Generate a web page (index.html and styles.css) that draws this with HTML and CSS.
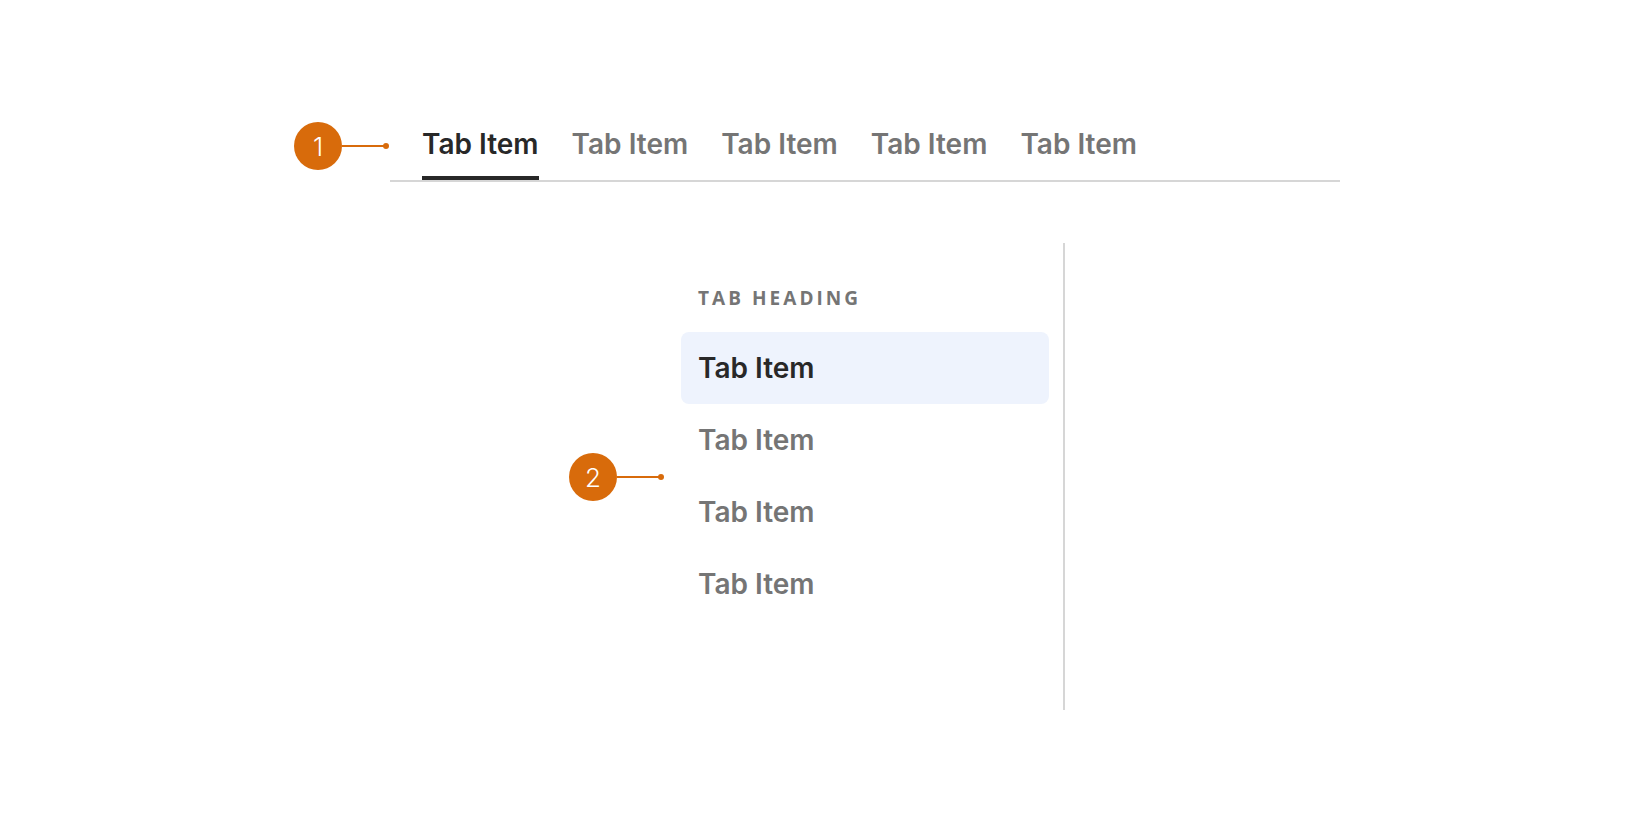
FILE: index.html
```html
<!DOCTYPE html>
<html lang="en">
<head>
<meta charset="utf-8">
<title>Tabs</title>
<link rel="stylesheet" href="styles.css">
</head>
<body>
<div class="page">
  <div class="htabs">
    <div class="annot annot-1"><span class="badge">1</span><span class="lead"></span><span class="dot"></span></div>
    <div class="htab active">Tab Item</div>
    <div class="htab">Tab Item</div>
    <div class="htab">Tab Item</div>
    <div class="htab">Tab Item</div>
    <div class="htab">Tab Item</div>
  </div>
  <div class="vnav">
    <div class="annot annot-2"><span class="badge">2</span><span class="lead"></span><span class="dot"></span></div>
    <div class="vheading">TAB HEADING</div>
    <div class="vtab active">Tab Item</div>
    <div class="vtab">Tab Item</div>
    <div class="vtab">Tab Item</div>
    <div class="vtab">Tab Item</div>
  </div>
</div>
</body>
</html>
```

FILE: styles.css
```css
* { box-sizing: border-box; }
html, body { margin: 0; padding: 0; background: #ffffff; }
body { font-family: "Inter", "Liberation Sans", sans-serif; }

.page {
  width: 1632px;
  height: 816px;
  padding-top: 128px;
}

.htabs {
  position: relative;
  margin-left: 390px;
  width: 950px;
  display: flex;
  gap: 33px;
  padding-left: 32px;
  border-bottom: 2px solid #d6d6d6;
}

.htab {
  font-size: 28px;
  font-weight: 600;
  line-height: 32px;
  color: #757575;
  padding-bottom: 16px;
  border-bottom: 4px solid transparent;
  white-space: nowrap;
}
.htab.active {
  color: #282828;
  border-bottom-color: #282828;
}

.vnav {
  position: relative;
  margin-top: 61px;
  margin-left: 681px;
  width: 384px;
  height: 467px;
  padding-top: 43px;
  padding-right: 14px;
  border-right: 2px solid #d6d6d6;
}

.vheading {
  font-family: "Open Sans", "Noto Sans", sans-serif;
  font-size: 19px;
  font-weight: 700;
  line-height: 24px;
  letter-spacing: 0.16em;
  color: #757575;
  padding-left: 17px;
  margin-bottom: 22px;
}

.vtab {
  height: 72px;
  line-height: 72px;
  font-size: 28px;
  font-weight: 600;
  color: #757575;
  padding-left: 17px;
  border-radius: 8px;
  white-space: nowrap;
}
.vtab.active {
  background: #eef3fd;
  color: #282828;
}

.annot {
  position: absolute;
  display: flex;
  align-items: center;
}
.annot-1 { left: -96px; top: -6px; }
.annot-2 { left: -112px; top: 210px; }

.badge {
  width: 48px;
  height: 48px;
  border-radius: 50%;
  background: #d86b0b;
  color: #ffffff;
  font-family: "Inter", "Liberation Sans", sans-serif;
  font-weight: 300;
  font-size: 26px;
  display: flex;
  align-items: center;
  justify-content: center;
}
.lead {
  width: 44px;
  height: 2px;
  background: #d86b0b;
}
.dot {
  width: 6px;
  height: 6px;
  margin-left: -3px;
  border-radius: 50%;
  background: #d86b0b;
}
```
